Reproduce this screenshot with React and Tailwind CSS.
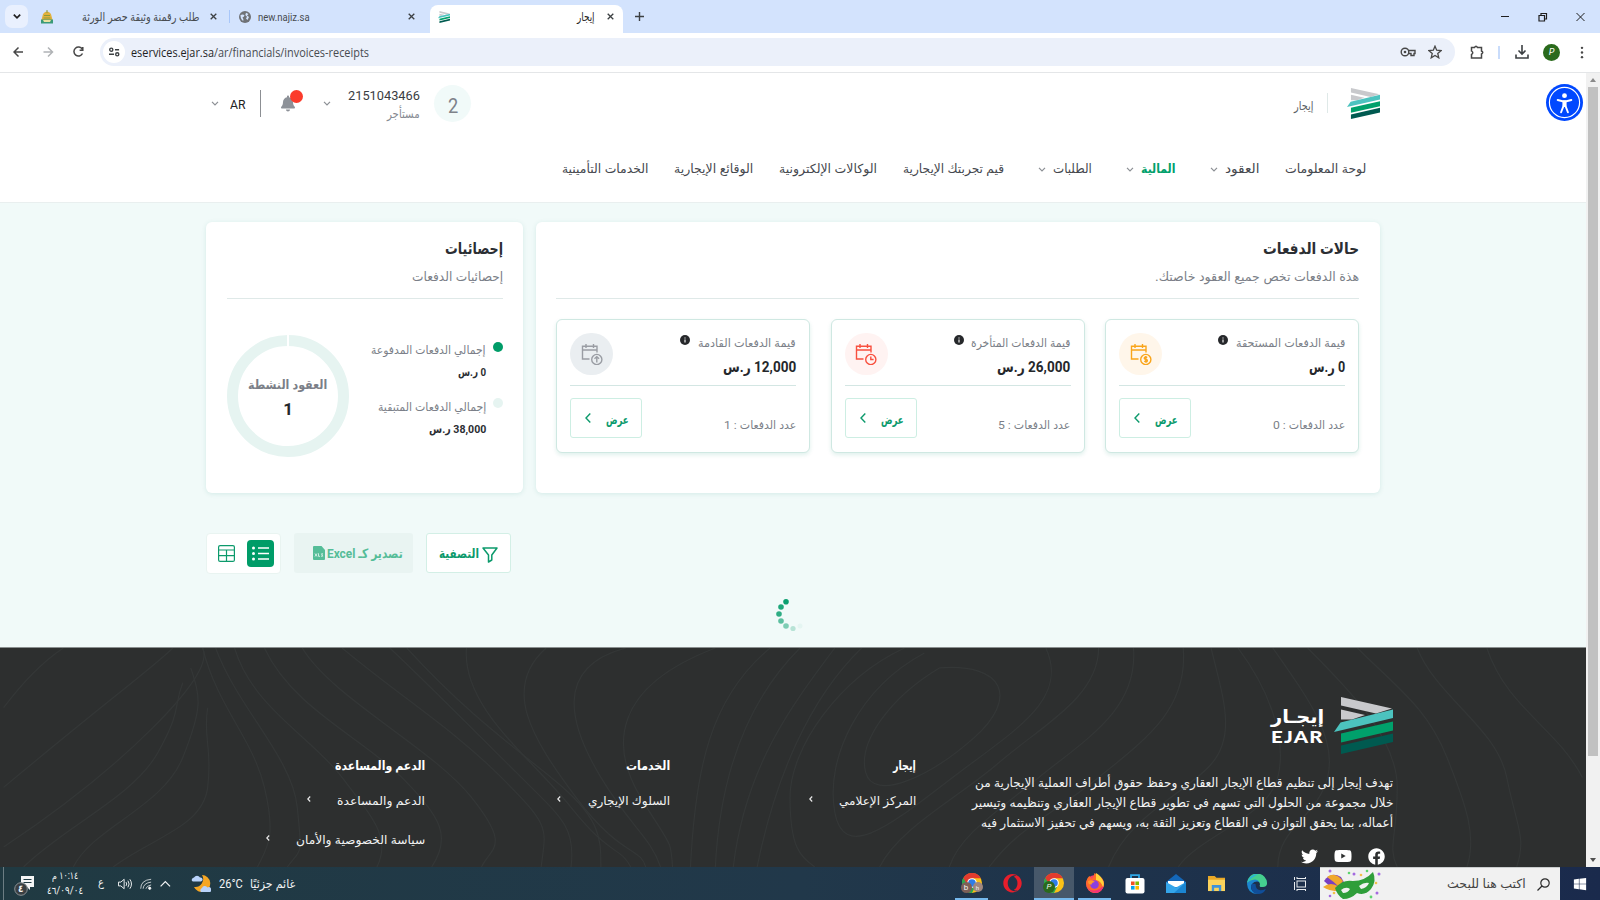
import { useLayoutEffect, useRef } from "react";
import { FaFacebook, FaYoutube, FaTwitter, FaBell, FaOpera, FaWindows } from "react-icons/fa";

/* Single line of text fitted to a fixed width */
function T({ w, h = 20, rtl = true, className = "", children }) {
  const ref = useRef(null);
  useLayoutEffect(() => {
    const el = ref.current;
    const k = w / el.offsetWidth;
    el.style.transform = `scaleX(${k})`;
  }, [w]);
  return (
    <span dir={rtl ? "rtl" : "ltr"} className={`flex shrink-0 items-center justify-start ${className}`} style={{ width: w, height: h }}>
      <span ref={ref} className={`block shrink-0 whitespace-nowrap ${rtl ? "origin-right" : "origin-left"}`}>
        {children}
      </span>
    </span>
  );
}

function Chevron({ className = "" }) {
  return (
    <svg viewBox="0 0 8 5" className={`h-[5px] w-[8px] shrink-0 fill-none stroke-[#8b8f94] ${className}`} strokeWidth="1.2">
      <path d="M1 .8 4 3.8 7 .8" />
    </svg>
  );
}

function Logo({ className = "" }) {
  return (
    <svg viewBox="0 0 59 57" className={`shrink-0 ${className}`} preserveAspectRatio="none">
      <path d="M7 0 58 11.5 42 16.5 7 8.500Z" fill="#c8c9cc" />
      <path d="M7 12.500 31 18 18 22.500 7 22.500Z" fill="#c8c9cc" />
      <path d="M59 12.500V21L0 35 6.500 25.500Z" fill="#4cc3bf" />
      <path d="M59 24.500V33.500L7 45.500V36.500Z" fill="#00a06b" />
      <path d="M59 36.500V45L7 57V48.500Z" fill="#005a50" />
    </svg>
  );
}

function Close({ className = "" }) {
  return (
    <svg viewBox="0 0 8 8" className={`size-[7px] shrink-0 stroke-[#3c4043] ${className}`} strokeWidth="1.5">
      <path d="M.8.8 7.200 7.200M7.200.8.8 7.200" />
    </svg>
  );
}

function TabStrip() {
  return (
    <div className="flex h-[33px] shrink-0 items-center bg-[#d3e3fd]">
      <div className="ml-[5px] flex h-[23px] w-[23px] items-center justify-center rounded-[7px] bg-[#e9f0fe]">
        <svg viewBox="0 0 8 5" className="h-[5px] w-[8px] fill-none stroke-[#1f1f1f]" strokeWidth="1.7"><path d="M.8.6 4 3.800 7.200.6" /></svg>
      </div>
      <svg viewBox="0 0 14 14" className="ml-[12px] h-[14px] w-[14px]">
        <path d="M2.500 6Q3 2 7 1.500 11 2 11.500 6L12.500 10H1.500Z" fill="#e2b13c" />
        <path d="M7 0v3M4 5.500h6M3.500 8h7" stroke="#8a9a3a" />
        <rect x="1" y="9.500" width="12" height="4" fill="#3a9a78" />
        <path d="M3 10h8l-1 2H4Z" fill="#e8e1a0" />
      </svg>
      <T w={117} className="ml-[28px] mt-[2px] text-[11.500px] text-[#474b50]">طلب رقمنة وثيقة حصر الورثة</T>
      <Close className="ml-[11px]" />
      <div className="ml-[12px] h-[13px] w-px bg-[#a8c7fa]" />
      <svg viewBox="0 0 12 12" className="ml-[9px] size-[12px]">
        <circle cx="6" cy="6" r="6" fill="#6f7276" />
        <path d="M1.500 4Q4 3 5.500 4.200 5 6 3.500 6.500 5 8 4.200 10 1.500 8.500 1.500 4ZM7 1.800 9.500 3 8 4.500 10 6 8.500 9 7 7.500 8 5.800 6.300 4Z" fill="#d3e3fd" />
      </svg>
      <T w={52} rtl={false} className="ml-[7px] mt-[2px] text-[11.500px] text-[#474b50]">new.najiz.sa</T>
      <Close className="ml-[98px]" />
      <div className="ml-[15px] mt-[5px] flex h-[28px] w-[193px] items-center rounded-t-[8px] bg-white pb-[5px]">
        <Logo className="ml-[8px] h-[12px] w-[12px]" />
        <T w={18} className="ml-[127px] mt-[2px] text-[11.500px] text-[#1f1f1f]">إيجار</T>
        <Close className="ml-[12px]" />
      </div>
      <svg viewBox="0 0 9 9" className="ml-[12px] size-[9px] stroke-[#3c4043]" strokeWidth="1.400"><path d="M4.500 0v9M0 4.500h9" /></svg>
      <svg viewBox="0 0 84 10" className="ml-auto mr-[15px] h-[10px] w-[84px] fill-none stroke-[#1f1f1f]">
        <path d="M0 4.500h8" />
        <path d="M38 3.500h5.500v5.500H38zM40 3.500V1.500h5.500V7H44" strokeWidth="1.200" />
        <path d="M75.500 1l8 8M83.500 1l-8 8" />
      </svg>
    </div>
  );
}

function Toolbar() {
  return (
    <div className="flex h-[40px] shrink-0 items-center border-b border-[#e4e6e8] bg-white pb-[1px]">
      <svg viewBox="0 0 74 12" className="ml-[13px] h-[12px] w-[74px] fill-none" strokeWidth="1.500">
        <path d="M10 6H1M5.500 1.500 1 6l4.500 4.500" stroke="#474747" />
        <path d="M30.500 6h9M35 1.500 39.500 6 35 10.500" stroke="#b0b3b6" />
        <path d="M69.300 3.200A4.500 4.500 0 1 0 69.500 7.500M69.800 1v3.200h-3.200" stroke="#474747" />
      </svg>
      <div className="ml-[13px] flex h-[28px] w-[1355px] items-center rounded-full bg-[#ebf0fa]">
        <div className="ml-[3px] flex size-[22px] items-center justify-center rounded-full bg-white">
          <svg viewBox="0 0 12 10" className="h-[10px] w-[11px] fill-none stroke-[#3c4043]" strokeWidth="1.500"><circle cx="2.500" cy="2.500" r="1.700" /><path d="M6.500 2.500H11M0 7.500h5.500" /><circle cx="9" cy="7.500" r="1.700" /></svg>
        </div>
        <T w={238} rtl={false} className="ml-[6px] mt-[2px] font-['Open_Sans'] text-[12px] text-[#474b50]"><span className="text-[#1f1f1f]">eservices.ejar.sa</span>/ar/financials/invoices-receipts</T>
        <svg viewBox="0 0 16 10" className="ml-auto h-[10px] w-[16px] fill-none stroke-[#474747]" strokeWidth="1.400">
          <circle cx="5" cy="5" r="3.800" /><circle cx="5" cy="5" r="1.300" fill="#474747" stroke="none" /><path d="M8.500 3.500H15V6.500H14V8.500H11V6.500H8.500" />
        </svg>
        <svg viewBox="0 0 24 24" className="ml-[12px] mr-[13px] size-[14px] fill-none stroke-[#474747]" strokeWidth="2.200"><path d="M12 2l2.900 7 7.600.6-5.800 5 1.800 7.400-6.500-4-6.500 4 1.800-7.400-5.800-5L9.100 9z" /></svg>
      </div>
      <svg viewBox="0 0 14 15" className="ml-[15px] h-[15px] w-[14px] fill-none stroke-[#474747]" strokeWidth="1.500"><path d="M1.500 2.500H4.500Q6 0 7.500 2.500H11.500V6Q14 7.500 11.500 9V13H1.500V9.500Q4 7.700 1.500 6Z" /></svg>
      <div className="ml-[14px] h-[13px] w-[2px] bg-[#c9dcfb]" />
      <svg viewBox="0 0 14 14" className="ml-[15px] size-[14px] fill-none stroke-[#3c4043]" strokeWidth="1.600"><path d="M7 0v8.500M3.500 5.500 7 9l3.500-3.500M1 9.500V13h12V9.500" /></svg>
      <div className="ml-[14px] flex size-[17px] items-center justify-center rounded-full bg-[#2a6a1c] font-['Inter'] text-[9px] text-white italic">P</div>
      <svg viewBox="0 0 4 14" className="ml-[20px] h-[13px] w-[4px] fill-[#474747]"><circle cx="2" cy="2" r="1.300" /><circle cx="2" cy="7" r="1.300" /><circle cx="2" cy="12" r="1.300" /></svg>
    </div>
  );
}

function Header() {
  return (
    <div className="relative flex h-[130px] shrink-0 flex-col border-b border-[#e9efef] bg-white">
      <div className="absolute left-[1546px] top-[11px] flex size-[37px] items-center justify-center rounded-full bg-[#0048ff]">
        <svg viewBox="0 0 38 38" className="size-[37px]">
          <circle cx="19" cy="19" r="15.500" fill="none" stroke="#fff" strokeWidth="1.200" />
          <circle cx="19" cy="12" r="2.500" fill="#fff" />
          <path d="M12 16.500l5 1.200h4l5-1.200M18.200 18v4l-2.700 7M19.800 18v4l2.700 7" stroke="#fff" strokeWidth="2" fill="none" strokeLinecap="round" />
          <path d="M17 17h4v6h-4z" fill="#fff" />
        </svg>
      </div>
      <div className="flex h-[60px] items-center pl-[211px] pr-[206px]">
        <Logo className="h-[31px] w-[33px]" />
        <div className="mr-[19px] h-[20px] w-px bg-[#dfe9e8]" />
        <T w={19} className="mr-[14px] mt-[5px] text-[12px] text-[#5b5f65]">إيجار</T>
        <div className="mr-auto flex size-[37px] items-center justify-center rounded-full bg-[#f1faf9]">
          <T w={10} rtl={false} className="mt-[5px] text-[20px] text-[#7e828a]">2</T>
        </div>
        <div className="mr-[14px] mt-[3px] flex flex-col items-start">
          <T w={72} h={18} rtl={false} className="text-[13.500px] text-[#3a3d42]">2151043466</T>
          <T w={33} h={18} className="text-[12px] text-[#868a92]">مستأجر</T>
        </div>
        <Chevron className="mr-[17px]" />
        <div className="relative mr-[28px]">
          <FaBell className="h-[17px] w-[14px] text-[#8d9198]" />
          <div className="absolute -top-[5px] left-[9px] size-[13px] rounded-full bg-[#fb3b2c]" />
        </div>
        <div className="mr-[20px] h-[27px] w-px bg-[#8c8f93]" />
        <T w={16} rtl={false} className="mr-[14px] mt-[3px] text-[13px] text-[#222]">AR</T>
        <Chevron className="mr-[11px]" />
      </div>
      <nav className="mt-[26px] flex h-[20px] items-center pr-[220px] text-[12.500px] text-[#45484e]">
        <T w={81}>لوحة المعلومات</T>
        <T w={34} className="mr-[26px]">العقود</T>
        <Chevron className="mr-[7px]" />
        <T w={34} className="mr-[35px] font-bold text-[#00a06b]">المالية</T>
        <Chevron className="mr-[7px]" />
        <T w={39} className="mr-[34px]">الطلبات</T>
        <Chevron className="mr-[7px]" />
        <T w={101} className="mr-[34px]">قيم تجربتك الإيجارية</T>
        <T w={98} className="mr-[26px]">الوكالات الإلكترونية</T>
        <T w={79} className="mr-[26px]">الوقائع الإيجارية</T>
        <T w={86} className="mr-[26px]">الخدمات التأمينية</T>
      </nav>
    </div>
  );
}

const badges = {
  due: <path d="M17.200 14.600q-1.800-1.300-2.800.1-.5 1.400 1.400 1.700 2 .4 1.400 1.800-1.100 1.200-2.900 0M15.800 13.100v6.700" />,
  late: <path d="M15.800 13.500v3h2.800" />,
  next: <path d="M15.800 19.500v-5.800M13.500 15.800l2.300-2.200 2.300 2.200" />,
};

function StatCard({ tone, badge, title, titleW, amount, amountW, count, countW }) {
  return (
    <div className="flex h-[134px] w-[254px] flex-col rounded-[6px] border border-[#cfe8e2] bg-white px-[13px] pt-[12px] shadow-[0_2px_4px_rgba(0,140,110,0.13)]">
      <div className="flex h-[54px] justify-between border-b border-[#d3e6e3]">
        <div className="flex flex-col">
          <div className="flex">
            <T w={titleW} h={24} className="text-[11.500px] text-[#7b7f88]">{title}</T>
            <svg viewBox="0 0 10 10" className="mr-[8px] mt-[3px] size-[10px]"><circle cx="5" cy="5" r="5" fill="#26282b" /><path d="M5 4.400v3M5 2.400v1" stroke="#fff" strokeWidth="1.100" /></svg>
          </div>
          <T w={amountW} h={23} className="text-[15px] font-bold text-[#24272b]">{amount}</T>
        </div>
        <div className={`mt-[1px] flex h-[42px] w-[43px] items-center justify-center rounded-full ${tone}`}>
          <svg viewBox="0 0 22 22" className="size-[22px] fill-none stroke-current" strokeWidth="1.400">
            <path d="M8.500 16H1.500V3.300H16V9.500M1.500 7H16M5 1v4M12.500 1v4" />
            <circle cx="15.800" cy="16.500" r="5.100" />
            {badges[badge]}
          </svg>
        </div>
      </div>
      <div className="mt-[12px] flex items-start justify-between">
        <T w={countW} className="mt-[18px] text-[11.500px] text-[#7b7f88]">{count}</T>
        <div className="flex h-[40px] w-[72px] items-center rounded-[3px] border border-[#cdeee3] pr-[12px]">
          <T w={23} className="mt-[3px] text-[12px] font-bold text-[#0c9a6c]">عرض</T>
          <svg viewBox="0 0 6 10" className="mr-[15px] h-[10px] w-[6px] fill-none stroke-[#0c9a6c]" strokeWidth="1.400"><path d="M5.300.6 1 5l4.300 4.400" /></svg>
        </div>
      </div>
    </div>
  );
}

function Cards() {
  return (
    <div className="flex h-[271px] gap-[13px] pr-[206px]">
      <section className="flex w-[844px] flex-col rounded-[6px] bg-white pl-[20px] pr-[21px] pt-[16px] shadow-[0_1px_5px_rgba(0,120,110,0.12)]">
        <T w={96} h={22} className="text-[16px] font-bold text-[#2b2e33]">حالات الدفعات</T>
        <T w={204} h={34} className="text-[12.500px] text-[#7b7f88]">هذة الدفعات تخص جميع العقود خاصتك.</T>
        <div className="mt-[4px] h-px bg-[#dfe9e8]" />
        <div className="mt-[20px] flex justify-between">
          <StatCard tone="bg-[#fff6ea] text-[#f9a51b]" badge="due" title="قيمة الدفعات المستحقة" titleW={109} amount="0 ر.س" amountW={36} count="عدد الدفعات : 0" countW={72} />
          <StatCard tone="bg-[#fff3f2] text-[#f8503f]" badge="late" title="قيمة الدفعات المتأخرة" titleW={99} amount="26,000 ر.س" amountW={73} count="عدد الدفعات : 5" countW={72} />
          <StatCard tone="bg-[#eaeef1] text-[#9a9da4]" badge="next" title="قيمة الدفعات القادمة" titleW={98} amount="12,000 ر.س" amountW={73} count="عدد الدفعات : 1" countW={72} />
        </div>
      </section>
      <section className="flex w-[317px] flex-col rounded-[6px] bg-white pl-[21px] pr-[20px] pt-[16px] shadow-[0_1px_5px_rgba(0,120,110,0.12)]">
        <T w={58} h={22} className="text-[16px] font-bold text-[#2b2e33]">إحصائيات</T>
        <T w={91} h={34} className="text-[12.500px] text-[#7b7f88]">إحصائيات الدفعات</T>
        <div className="mt-[4px] h-px bg-[#dfe9e8]" />
        <div className="mt-[36px] flex justify-between">
          <div className="mt-[5px] flex flex-col">
            <div className="flex gap-[7px]">
              <div className="mt-[2px] size-[10px] rounded-full bg-[#009c68]" />
              <div className="mt-[1px] flex flex-col">
                <T w={115} className="text-[11.500px] text-[#7b7f88]">إجمالي الدفعات المدفوعة</T>
                <T w={28} h={24} className="text-[11.500px] font-bold text-[#2b2e33]">0 ر.س</T>
              </div>
            </div>
            <div className="mt-[11px] flex gap-[7px]">
              <div className="mt-[2px] size-[10px] rounded-full bg-[#e6f4f1]" />
              <div className="mt-[2px] flex flex-col">
                <T w={108} className="text-[11.500px] text-[#7b7f88]">إجمالي الدفعات المتبقية</T>
                <T w={57} h={24} className="text-[11.500px] font-bold text-[#2b2e33]">38,000 ر.س</T>
              </div>
            </div>
          </div>
          <div className="relative flex size-[122px] flex-col items-center justify-center rounded-full border-[11px] border-[#e6f4f1] pt-[4px]">
            <div className="absolute -top-[11px] left-[49px] h-[11px] w-[2px] bg-white" />
            <T w={79} h={24} className="text-[12.500px] font-bold text-[#7b7f88]">العقود النشطة</T>
            <span className="flex h-[26px] items-center text-[17px] font-bold text-[#24272b]">1</span>
          </div>
        </div>
      </section>
    </div>
  );
}

function Actions() {
  return (
    <div className="mt-[40px] flex h-[41px] pr-[1075px]">
      <div className="flex h-[40px] w-[85px] items-center rounded-[3px] border border-[#d3efe6] bg-white pr-[12px]">
        <svg viewBox="0 0 16 16" className="mt-[3px] h-[16px] w-[16px] fill-none stroke-[#0c9a6c]" strokeWidth="1.500"><path d="M1 1H15L9.800 8V13L6.500 15V8Z" strokeLinejoin="round" /></svg>
        <T w={40} className="mr-[3px] mt-[2px] text-[13px] font-bold text-[#0c9a6c]">التصفية</T>
      </div>
      <div className="mr-[13px] flex h-[40px] w-[119px] items-center rounded-[3px] bg-[#e9f4f2] pr-[10px]">
        <T w={76} className="mt-[2px] text-[13px] font-bold text-[#55bd98]">تصدير كـ Excel</T>
        <svg viewBox="0 0 12 14" className="mr-[2px] h-[14px] w-[12px]"><path d="M0 1Q0 0 1 0H8.500L12 4V13Q12 14 11 14H1Q0 14 0 13Z" fill="#55bd98" /><path d="M2 7.500l2 3M4 7.500l-2 3M5.500 7.300v3h1.500M10 7.800H8.500L9.700 10.200H8" stroke="#fff" strokeWidth=".7" fill="none" /></svg>
      </div>
      <div className="mr-[13px] flex h-[41px] w-[75px] items-center gap-[12px] rounded-[4px] border border-[#e9f4f1] bg-white pr-[6px]">
        <div className="flex size-[27px] items-center justify-center rounded-[4px] bg-[#009c68]">
          <svg viewBox="0 0 17 15" className="h-[15px] w-[17px] fill-white stroke-white" strokeWidth="1.500"><path d="M6 2H17M6 7.500H17M6 13H17" /><g stroke="none"><circle cx="1.500" cy="2" r="1.500" /><circle cx="1.500" cy="7.500" r="1.500" /><circle cx="1.500" cy="13" r="1.500" /></g></svg>
        </div>
        <svg viewBox="0 0 17 17" className="size-[17px] fill-none stroke-[#0c9a6c]" strokeWidth="1.200"><rect x=".6" y=".6" width="15.800" height="15.800" rx="1.500" /><path d="M.6 5H16.400M.6 10.700H16.400M8.500 5V16.400" /></svg>
      </div>
    </div>
  );
}

function Spinner() {
  return (
    <svg viewBox="776 598 34 34" className="mr-[776px] mt-[24px] size-[34px] fill-[#0c9f70]">
      <circle cx="786" cy="601.700" r="2.800" /><circle cx="781" cy="607" r="2.800" opacity=".92" /><circle cx="779" cy="614" r="2.800" opacity=".85" />
      <circle cx="781" cy="621" r="2.800" opacity=".65" /><circle cx="786" cy="626" r="2.800" opacity=".5" /><circle cx="793" cy="628.500" r="2.600" opacity=".25" /><circle cx="800" cy="626" r="2.500" opacity=".05" />
    </svg>
  );
}

function FooterLink({ w, gap, children }) {
  return (
    <div className="flex h-[20px] items-center">
      <T w={w} className="text-[12px] text-[#f2f3f3]">{children}</T>
      <svg viewBox="0 0 4 6" className={`mb-[4px] h-[6px] w-[4px] fill-none stroke-[#e8e8e8] ${gap}`} strokeWidth="1.200"><path d="M3.200.5.8 3l2.400 2.500" /></svg>
    </div>
  );
}

const contours = [
  "M0 60Q30 20 60 0", "M0 140Q60 90 110 50T170 0", "M0 200Q90 140 150 80T200 0",
  "M200 0C215 60 250 90 262 140S265 200 255 220", "M213 0C235 60 290 110 295 160S300 200 285 220",
  "M232 0C250 60 310 90 340 130S390 190 375 220", "M262 0C290 60 360 90 400 130S450 190 430 220",
  "M300 0C330 50 430 100 470 150S490 200 480 220", "M340 0C400 50 450 80 500 130S545 180 540 220",
  "M388 0C420 30 480 90 520 130S575 180 570 220", "M405 0C460 60 500 90 550 130S600 190 600 220",
  "M465 0C460 60 530 110 570 160S620 200 630 220", "M545 0C500 40 530 90 575 150S640 200 645 220",
  "M625 0C550 20 570 80 600 130S650 190 660 220", "M715 0C610 40 610 100 640 150S670 190 672 220",
  "M770 0C710 50 695 120 690 220", "M800 0C750 50 720 120 715 220", "M835 0C790 60 745 120 733 220", "M862 0C810 50 775 130 757 220",
  "M905 0C840 30 790 100 790 150S800 210 815 220", "M925 5C860 40 825 110 835 165S900 170 960 125 1070 50 1047 0",
  "M940 20C890 50 858 95 866 125S930 130 975 90 1005 15 940 20",
  "M1100 0C1100 50 1040 80 1000 115S900 180 880 220",
  "M1135 0C1140 60 1090 90 1040 130S960 190 950 220", "M1185 0C1190 60 1150 90 1100 130S1020 180 990 220",
  "M1213 0C1225 50 1240 90 1210 120S1130 170 1110 220", "M1240 0C1270 40 1290 90 1280 130S1200 190 1180 220",
  "M1275 0C1310 50 1340 90 1330 130S1280 180 1280 220", "M1310 0C1350 40 1400 90 1400 140S1390 200 1400 220",
  "M1360 0C1400 40 1430 60 1450 110S1480 190 1470 220", "M1420 0C1440 50 1500 80 1510 130S1530 190 1520 220", "M1490 0C1510 60 1560 80 1586 130",
  "M70 220C90 180 160 160 180 110S198 50 188 20", "M20 220C60 180 130 150 155 105S170 60 180 35", "M110 220C150 190 200 180 205 140S200 90 205 60",
];

function Footer() {
  return (
    <footer className="relative flex h-[220px] shrink-0 overflow-hidden border-t border-[#8a8f8f] bg-[#2d2f2f] pr-[193px]">
      <svg viewBox="0 0 1586 220" className="absolute inset-0 h-full w-full fill-none stroke-[#343737]" strokeWidth="1.200">
        {contours.map((d) => <path key={d} d={d} />)}
      </svg>
      <div className="relative flex w-[421px] flex-col pt-[49px]">
        <div className="flex items-center">
          <Logo className="h-[57px] w-[59px]" />
          <div className="mr-[10px] flex flex-col">
            <T w={53} h={22} className="text-[18px] font-bold text-white">إيجـار</T>
            <T w={53} h={19} rtl={false} className="font-['Lato'] text-[17px] font-black tracking-[1px] text-white">EJAR</T>
          </div>
        </div>
        <div className="mt-[19px] flex flex-col text-[12.500px] text-[#f2f3f3]">
          <T w={418}>تهدف إيجار إلى تنظيم قطاع الإيجار العقاري وحفظ حقوق أطراف العملية الإيجارية من</T>
          <T w={421}>خلال مجموعة من الحلول التي تسهم في تطوير قطاع الإيجار العقاري وتنظيمه وتيسير</T>
          <T w={412}>أعماله، بما يحقق التوازن في القطاع وتعزيز الثقة به، ويسهم في تحفيز الاستثمار فيه</T>
        </div>
        <div className="mt-[14px] flex items-center gap-[16px] pr-[8px] text-white">
          <FaFacebook className="size-[17px]" />
          <FaYoutube className="size-[18px]" />
          <FaTwitter className="size-[17px]" />
        </div>
      </div>
      <div className="relative mr-[56px] flex w-[246px] flex-col pt-[108px]">
        <T w={23} className="mb-[15px] text-[12.500px] font-bold text-white">إيجار</T>
        <FooterLink w={77} gap="mr-[26px]">المركز الإعلامي</FooterLink>
      </div>
      <div className="relative flex w-[245px] flex-col pt-[108px]">
        <T w={44} className="mb-[15px] text-[12.500px] font-bold text-white">الخدمات</T>
        <FooterLink w={82} gap="mr-[27px]">السلوك الإيجاري</FooterLink>
      </div>
      <div className="relative flex flex-col pt-[108px]">
        <T w={90} className="mb-[15px] text-[12.500px] font-bold text-white">الدعم والمساعدة</T>
        <FooterLink w={88} gap="mr-[26px]">الدعم والمساعدة</FooterLink>
        <div className="h-[19px]" />
        <FooterLink w={129} gap="mr-[26px]">سياسة الخصوصية والأمان</FooterLink>
      </div>
    </footer>
  );
}

function ChromeIcon() {
  return (
    <svg viewBox="0 0 20 20" className="size-[20px]">
      <circle cx="10" cy="10" r="10" fill="#fbc116" />
      <path d="M10 10 1.300 5A10 10 0 0 0 10 20L14 12Z" fill="#2da94f" />
      <path d="M10 5.200H18.800A10 10 0 0 0 1.300 5L5.600 12Z" fill="#e33b2e" />
      <circle cx="10" cy="10" r="4.800" fill="#fff" /><circle cx="10" cy="10" r="3.800" fill="#2f7de9" />
    </svg>
  );
}

function Taskbar() {
  return (
    <div dir="ltr" className="flex h-[33px] shrink-0 items-center bg-gradient-to-r from-[#203a42] via-[#21384a] to-[#1a2a4c] text-[#f2f4f5]">
      <div className="ml-[3px] h-full w-px bg-[#6c7d83]" />
      <div className="relative ml-[10px] h-[24px] w-[21px]">
        <svg viewBox="0 0 21 24" className="h-[24px] w-[21px]"><path d="M7 4H20V15H16V18L13 15H7Z" fill="#f5f5f5" /><path d="M9.500 7.500h8M9.500 10.500h8" stroke="#203a42" /><circle cx="7" cy="17" r="6.300" fill="#3a3f42" stroke="#8b9396" /></svg>
        <span className="absolute left-[4px] top-[9px] text-[10px] font-bold leading-[16px]">٤</span>
      </div>
      <div className="ml-[12px] flex w-[36px] flex-col items-center">
        <T w={26} h={15} className="text-[10.500px]">١٠:١٤ م</T>
        <T w={36} h={15} rtl={false} className="text-[10.500px]"><span dir="ltr" className="[unicode-bidi:bidi-override]">٤٦/٠٩/٠٤</span></T>
      </div>
      <span className="ml-[15px] w-[8px] text-[11px]">ع</span>
      <svg viewBox="0 0 56 14" className="ml-[12px] h-[14px] w-[53px] fill-none stroke-[#f2f4f5]">
        <path d="M.5 5H3L6.500 2V12L3 9H.5ZM8.500 5Q10 7 8.500 9M10.500 3.500Q13 7 10.500 10.500M12.500 2Q16 7 12.500 12" />
        <path d="M24 12Q24 3 35 2M26.500 12Q27 6 35 5M29.500 12Q30 9 35 8" opacity=".8" /><circle cx="33.500" cy="11.500" r="1.200" fill="#fff" />
        <path d="M45 9.500 50 4.500 55 9.500" strokeWidth="1.300" />
      </svg>
      <svg viewBox="0 0 20 20" className="ml-[20px] size-[20px]"><path d="M11 1A8.500 8.500 0 1 1 3 13 8 8 0 0 0 11 1Z" fill="#f5a623" /><path d="M1 7a2.500 2.500 0 0 1 2-3.500 3.500 3.500 0 0 1 6 0A2 2 0 0 1 10 7.500H2ZM10 18a2.500 2.500 0 0 1 1-4 3 3 0 0 1 5.500-.5A2.500 2.500 0 0 1 19 18Z" fill="#b9d3fb" /></svg>
      <T w={24} rtl={false} className="ml-[8px] text-[12px]">26°C</T>
      <T w={45} className="ml-[7px] text-[12px]">غائم جزئيًا</T>

      <div className="ml-auto flex h-full w-[33px] flex-col items-center justify-between border-b-2 border-[#76b9ed] pt-[6px]">
        <div className="relative"><ChromeIcon />
          <span className="absolute -left-[1px] top-[9px] flex size-[11px] items-center justify-center rounded-full bg-[#7d6058] text-[8px]">b</span>
          <span className="absolute left-[11px] top-[9px] flex size-[10px] items-center justify-center rounded-full bg-[#a1887f] text-[6px]">h</span>
        </div>
      </div>
      <FaOpera className="ml-[15px] size-[19px] text-[#e81e2b]" />
      <div className="relative ml-[12px] flex h-full w-[40px] flex-col items-center border-b-2 border-[#76b9ed] bg-[#47586a] pt-[6px]">
        <div className="relative"><ChromeIcon />
          <span className="absolute -left-[1px] top-[8px] flex size-[12px] items-center justify-center rounded-full bg-[#2a6a1c] text-[8px] italic">P</span>
        </div>
      </div>
      <div className="ml-[4px] flex h-full w-[33px] flex-col items-center border-b-2 border-[#76b9ed] pt-[6px]">
        <svg viewBox="0 0 20 20" className="size-[20px]">
          <circle cx="10" cy="11" r="9" fill="#f6416c" /><path d="M1 10Q2 4 5 3L6.500 6Q9 4 9.500 0 14 2 15 6L17 5Q20 10 18.500 14 15 21 9 20 2 19 1 10Z" fill="#ff6a2a" />
          <path d="M1.500 13Q5 19 12 17 17 15 18.500 12 18 18 12 20 4 20 1.500 13Z" fill="#f0327a" />
          <path d="M11 0Q16 3 17 6 20 10 18 14 16 8 11 7Z" fill="#ffd23a" /><circle cx="9.500" cy="11.500" r="4.300" fill="#8a3fe0" /><path d="M3 8Q7 6 10 9 7 9 6.500 11.500 3 12 3 8Z" fill="#ff9a2a" />
        </svg>
      </div>
      <svg viewBox="0 0 20 20" className="ml-[14px] size-[20px]"><path d="M6 5V1.200H14V5" fill="none" stroke="#2fa8e8" strokeWidth="1.800" /><rect x=".5" y="4" width="19" height="15.500" rx="2" fill="#fff" /><path d="M6 7.500h3.600v3.600H6z" fill="#f25022" /><path d="M10.400 7.500H14v3.600h-3.600z" fill="#7fba00" /><path d="M6 12h3.600v3.600H6z" fill="#00a4ef" /><path d="M10.400 12H14v3.600h-3.600z" fill="#ffb900" /></svg>
      <svg viewBox="0 0 20 20" className="ml-[21px] size-[20px]"><path d="M0 8 10 0 20 8V19H0Z" fill="#1467b8" /><path d="M2 7H18V13H2Z" fill="#fff" /><path d="M0 8 10 13.500 20 8V19H0Z" fill="#34a5ea" /><path d="M20 8V19H8Z" fill="#1b86d2" /></svg>
      <svg viewBox="0 0 20 18" className="ml-[21px] h-[17px] w-[19px]"><path d="M1 1H8L10 3H19V17H1Z" fill="#e9a826" /><path d="M1 5H19V17H1Z" fill="#fbd35c" /><path d="M5 17V10.500H15V17H12.500V13.500H7.500V17Z" fill="#3e92d9" /></svg>
      <svg viewBox="0 0 20 20" className="ml-[21px] size-[20px]"><path d="M0 10A10 10 0 0 1 19 6Q21 12 14.500 13 12 13 13 11 14 8 10 7.500 4 8 4 14 5 19 12 19.800 1 21 0 10Z" fill="#1c86cf" /><path d="M0 9A10 10 0 0 1 20 10Q19.500 13.500 14.500 13 12 13 13 11 13 6 8 5.500 2 6 0 9Z" fill="#45cf8e" /><path d="M0 9Q3 0 11 .1 5 3 0 9Z" fill="#2bb5d8" /><path d="M4 12Q4 20 12 19.900 17 19.500 18.800 15 9 19 8.500 10 4 9 4 12Z" fill="#104e99" /></svg>
      <svg viewBox="0 0 14 14" className="ml-[26px] size-[14px] fill-none stroke-[#e8ecef]"><rect x="4" y="4" width="8.500" height="6" /><path d="M4 1.500h8.500M4 12.500h8.500M1.500 0v3M1.500 5v8M4 0v2M12.500 0v2M4 12v2M12.500 12v2" /></svg>
      <div className="ml-[13px] flex h-full w-[240px] items-center border-t border-[#c9cccd] bg-[#f1f1f1]">
        <svg viewBox="0 0 58 31" className="ml-[3px] h-[31px] w-[58px]">
          <path d="M1 12Q8 2 18 8L22 15 12 22Z" fill="#7a3fc2" /><path d="M4 8Q12 2 20 12L16 18Q10 12 4 8ZM0 18Q8 12 16 18L14 22Q6 22 0 18Z" fill="#f0a92c" />
          <path d="M12 19Q20 10 30 12 42 12 50 3 54 12 48 20 42 27 34 24 28 30 20 30 14 26 12 19Z" fill="#2f9e3a" />
          <path d="M18 21Q23 17 27 20 25 24 20 24ZM36 17Q41 13 46 14 44 19 38 20Z" fill="#f1f1f1" />
          <g fill="#a46ae0"><circle cx="7" cy="2" r="1.500" /><circle cx="31" cy="5" r="1.500" /><circle cx="56" cy="5" r="1.500" /><circle cx="54" cy="24" r="1.500" /><circle cx="7" cy="27" r="1.300" /></g>
          <g fill="#5ed46e"><circle cx="26" cy="4" r="1.300" /><circle cx="44" cy="2" r="1.300" /><circle cx="48" cy="28" r="1.400" /></g>
          <g fill="#f2c14a"><circle cx="38" cy="6" r="1.300" /><circle cx="53" cy="14" r="1.300" /><circle cx="11" cy="24" r="1.300" /></g>
        </svg>
        <T w={79} className="ml-[66px] text-[12.500px] text-[#454545]">اكتب هنا للبحث</T>
        <svg viewBox="0 0 13 13" className="ml-[11px] size-[13px] fill-none stroke-[#2b2b2b]" strokeWidth="1.200"><circle cx="8" cy="5" r="4.200" /><path d="M5 8 .5 12.500" /></svg>
      </div>
      <FaWindows className="ml-[13px] mr-[13px] size-[14px] text-white" />
    </div>
  );
}

export default function App() {
  return (
    <div className="flex h-[900px] w-[1600px] flex-col overflow-hidden bg-white font-[Roboto,'DejaVu_Sans_Condensed','DejaVu_Sans',sans-serif] leading-normal">
      <TabStrip />
      <Toolbar />
      <div className="flex h-[794px] shrink-0">
        <main dir="rtl" className="flex w-[1586px] flex-col bg-[#f1faf9]">
          <Header />
          <div className="flex h-[444px] flex-col pt-[19px]">
            <Cards />
            <Actions />
            <Spinner />
          </div>
          <Footer />
        </main>
        <div className="flex w-[14px] flex-col items-center justify-between bg-[#f1f1f1] py-[5px]">
          <svg viewBox="0 0 6 4" className="h-[4px] w-[6px] shrink-0 fill-[#8a8a8a]"><path d="M3 0 6 4H0Z" /></svg>
          <div className="mb-auto mt-[5px] h-[669px] w-[10px] bg-[#c1c1c1]" />
          <svg viewBox="0 0 6 4" className="h-[4px] w-[6px] shrink-0 fill-[#505050]"><path d="M0 0H6L3 4Z" /></svg>
        </div>
      </div>
      <Taskbar />
    </div>
  );
}
